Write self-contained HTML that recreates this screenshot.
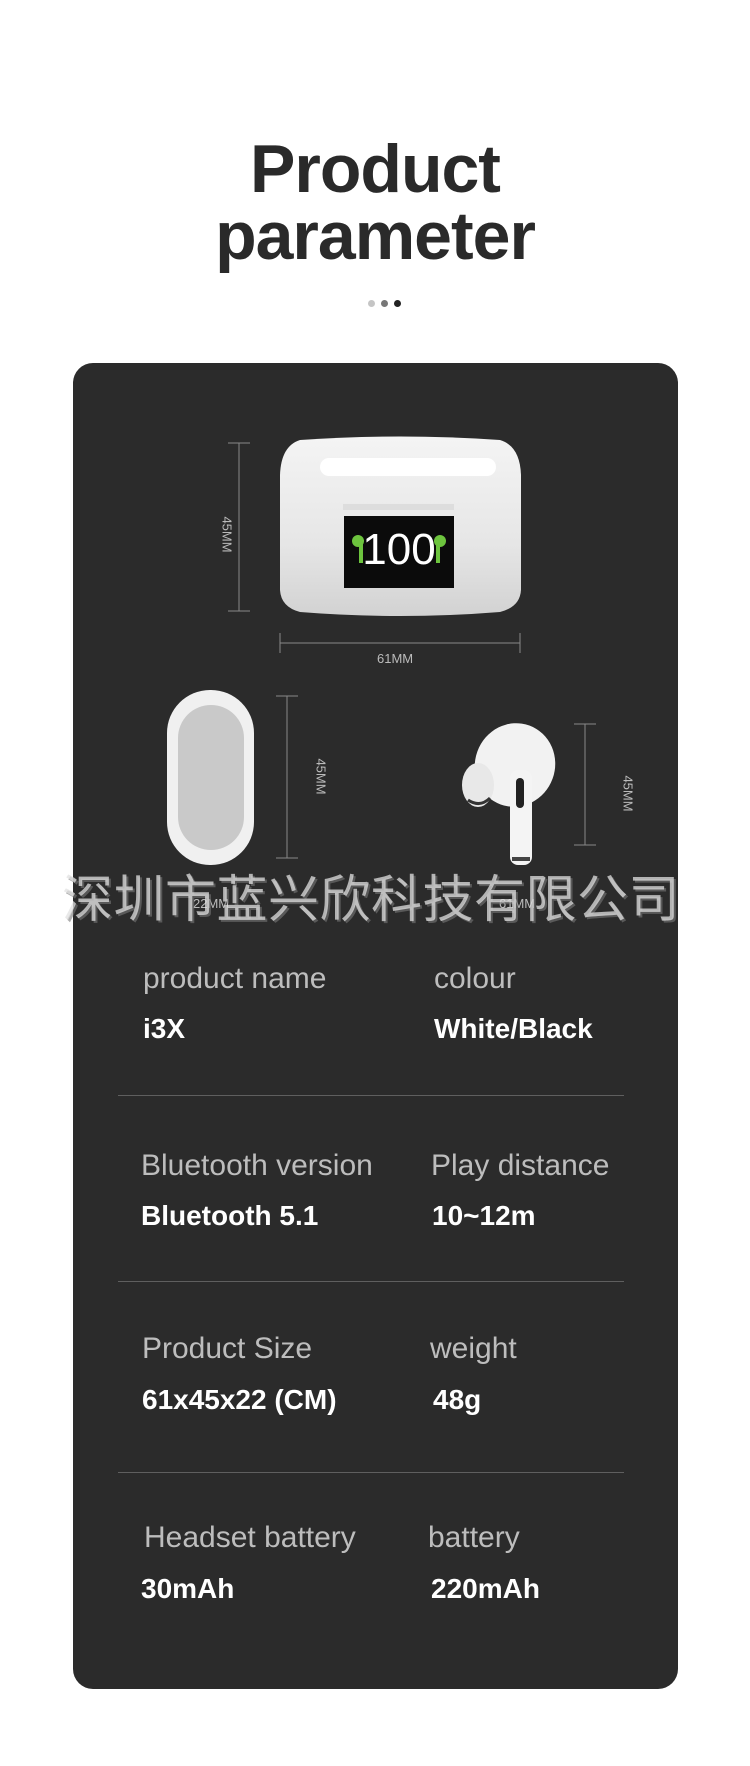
<!DOCTYPE html>
<html><head><meta charset="utf-8"><style>
*{margin:0;padding:0;box-sizing:border-box}
body{width:750px;height:1766px;background:#fff;position:relative;overflow:hidden;font-family:"Liberation Sans","Noto Sans CJK SC",sans-serif}
.t{position:absolute;left:0;width:750px;text-align:center;font-weight:bold;font-size:68px;color:#2a2a2a;line-height:67px;letter-spacing:-1px}
.dot{position:absolute;top:300px;width:7px;height:7px;border-radius:50%}
.card{position:absolute;left:73px;top:363px;width:605px;height:1326px;background:#2b2b2b;border-radius:20px}
.l{position:absolute;font-size:30px;color:#bdbdbd;white-space:nowrap}
.v{position:absolute;font-size:28px;color:#fff;font-weight:bold;white-space:nowrap}
.hr{position:absolute;left:118px;width:506px;height:1px;background:#5f5f5f}
.s{position:absolute;font-size:13px;color:#bbb;white-space:nowrap}
.wm{position:absolute;left:62px;top:858px;font-size:51px;color:rgba(225,225,225,.75);white-space:nowrap;text-shadow:2px 2px 0 rgba(120,120,120,.6);letter-spacing:0.5px}
</style></head><body>
<div class="t" style="top:136px">Product</div>
<div class="t" style="top:203px">parameter</div>
<div class="dot" style="left:368px;background:#c5c5c5"></div>
<div class="dot" style="left:381px;background:#777"></div>
<div class="dot" style="left:394px;background:#222"></div>
<div class="card"></div>
<svg style="position:absolute;left:0;top:0" width="750" height="920">
<g stroke="#888" stroke-width="1" fill="none">
<path d="M239 443V611M228 443H250M228 611H250"/>
<path d="M280 643H520M280 633V653M520 633V653"/>
<path d="M287 696V858M276 696H298M276 858H298"/>
<path d="M585 724V845M574 724H596M574 845H596"/>
</g>
<defs><linearGradient id="g1" x1="0" y1="0" x2="0" y2="1"><stop offset="0" stop-color="#f4f4f4"/><stop offset=".6" stop-color="#e6e6e6"/><stop offset="1" stop-color="#d2d2d2"/></linearGradient></defs>
<path d="M300 440Q281 446 280 475L280 590Q281 607 300 612Q400 620 500 612Q520 607 521 590L521 475Q520 446 500 440Q400 433 300 440Z" fill="url(#g1)"/>
<rect x="320" y="458" width="176" height="18" rx="9" fill="#fff"/>
<rect x="343" y="504" width="111" height="6" fill="#ddd"/>
<rect x="344" y="516" width="110" height="72" fill="#0b0b0b"/>
<text x="399" y="564" font-family="Liberation Sans" font-size="44" fill="#fff" text-anchor="middle">100</text>
<circle cx="358" cy="541" r="6" fill="#6dc43e"/><rect x="359" y="541" width="4" height="22" fill="#6dc43e"/>
<circle cx="440" cy="541" r="6" fill="#6dc43e"/><rect x="436" y="541" width="4" height="22" fill="#6dc43e"/>
<rect x="167" y="690" width="87" height="175" rx="43" fill="#f0f0f0"/>
<rect x="178" y="705" width="66" height="145" rx="33" fill="#c9c9c9"/>
<ellipse cx="515" cy="765" rx="40" ry="42" transform="rotate(20 515 765)" fill="#f2f2f2"/>
<ellipse cx="478" cy="785" rx="16" ry="22" fill="#e8e8e8"/>
<path d="M468 800Q480 808 490 798" stroke="#333" stroke-width="3" fill="none"/>
<rect x="510" y="770" width="22" height="95" rx="8" fill="#f4f4f4"/>
<rect x="516" y="778" width="8" height="30" rx="4" fill="#222"/>
<rect x="512" y="857" width="18" height="4" fill="#444"/>
</svg>
<div class="s" style="left:209px;top:527px;transform:rotate(90deg)">45MM</div>
<div class="s" style="left:377px;top:651px">61MM</div>
<div class="s" style="left:303px;top:769px;transform:rotate(90deg)">45MM</div>
<div class="s" style="left:610px;top:786px;transform:rotate(90deg)">45MM</div>
<div class="s" style="left:193px;top:896px">22MM</div>
<div class="s" style="left:499px;top:896px">61MM</div>
<div class="wm">深圳市蓝兴欣科技有限公司</div>
<div class="l" style="left:143px;top:962px">product name</div>
<div class="l" style="left:434px;top:962px">colour</div>
<div class="v" style="left:143px;top:1013px">i3X</div>
<div class="v" style="left:434px;top:1013px">White/Black</div>
<div class="hr" style="top:1095px"></div>
<div class="l" style="left:141px;top:1149px">Bluetooth version</div>
<div class="l" style="left:431px;top:1149px">Play distance</div>
<div class="v" style="left:141px;top:1200px">Bluetooth 5.1</div>
<div class="v" style="left:432px;top:1200px">10~12m</div>
<div class="hr" style="top:1281px"></div>
<div class="l" style="left:142px;top:1332px">Product Size</div>
<div class="l" style="left:430px;top:1332px">weight</div>
<div class="v" style="left:142px;top:1384px">61x45x22 (CM)</div>
<div class="v" style="left:433px;top:1384px">48g</div>
<div class="hr" style="top:1472px"></div>
<div class="l" style="left:144px;top:1521px">Headset battery</div>
<div class="l" style="left:428px;top:1521px">battery</div>
<div class="v" style="left:141px;top:1573px">30mAh</div>
<div class="v" style="left:431px;top:1573px">220mAh</div>
</body></html>
